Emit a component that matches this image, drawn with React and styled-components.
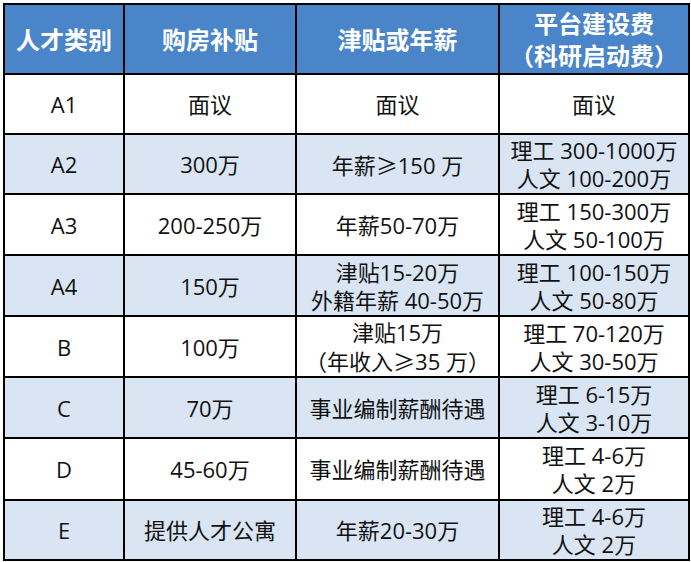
import React from "react";
import styled, { createGlobalStyle } from "styled-components";

const Global = createGlobalStyle`
  html, body { margin: 0; padding: 0; background: #ffffff; }
  body { font-family: "Open Sans", "Noto Sans CJK SC", sans-serif; }
`;

const Table = styled.div`
  display: grid;
  grid-template-columns: 118px 170px 201px 188px;
  grid-template-rows: 68px 58px 58px 59px 59px 59px 59px 60px 58px;
  gap: 2px;
  background: #000;
  border: 2px solid #000;
  width: max-content;
  margin: 3px 0 0 3px;
`;

const tones = {
  head: "#4a85c9",
  light: "#d9e5f3",
  white: "#ffffff",
};

const Cell = styled.div`
  background: ${(p) => tones[p.$tone]};
  color: ${(p) => (p.$tone === "head" ? "#ffffff" : "#111111")};
  font-family: ${(p) =>
    p.$tone === "head"
      ? '"Noto Sans CJK SC", sans-serif'
      : '"Open Sans", "Noto Sans CJK SC", sans-serif'};
  font-size: ${(p) => (p.$tone === "head" ? "24px" : "22px")};
  font-weight: ${(p) => (p.$tone === "head" ? 700 : 400)};
  line-height: ${(p) => (p.$tone === "head" ? "32px" : "28px")};
  display: flex;
  flex-direction: column;
  align-items: center;
  justify-content: center;
  text-align: center;
  white-space: nowrap;
`;

const Line = styled.span`
  display: block;
`;

const Sym = styled.span`
  font-family: "Noto Sans CJK SC", sans-serif;
`;

const GE = () => <Sym>≥</Sym>;

const header = ["人才类别", "购房补贴", "津贴或年薪", ["平台建设费", "（科研启动费）"]];

const rows = [
  ["A1", "面议", "面议", "面议"],
  ["A2", "300万", <>年薪<GE />150 万</>, ["理工 300-1000万", "人文 100-200万"]],
  ["A3", "200-250万", "年薪50-70万", ["理工 150-300万", "人文 50-100万"]],
  ["A4", "150万", ["津贴15-20万", "外籍年薪 40-50万"], ["理工 100-150万", "人文 50-80万"]],
  ["B", "100万", ["津贴15万", <>（年收入<GE />35 万）</>], ["理工 70-120万", "人文 30-50万"]],
  ["C", "70万", "事业编制薪酬待遇", ["理工 6-15万", "人文 3-10万"]],
  ["D", "45-60万", "事业编制薪酬待遇", ["理工 4-6万", "人文 2万"]],
  ["E", "提供人才公寓", "年薪20-30万", ["理工 4-6万", "人文 2万"]],
];

const renderContent = (c) =>
  (Array.isArray(c) ? c : [c]).map((l, i) => <Line key={i}>{l}</Line>);

export default function App() {
  return (
    <>
      <Global />
      <Table>
        {header.map((h, i) => (
          <Cell key={"h" + i} $tone="head">
            {renderContent(h)}
          </Cell>
        ))}
        {rows.map((r, ri) =>
          r.map((c, ci) => (
            <Cell key={ri + "-" + ci} $tone={ri % 2 === 0 ? "white" : "light"}>
              {renderContent(c)}
            </Cell>
          ))
        )}
      </Table>
    </>
  );
}
